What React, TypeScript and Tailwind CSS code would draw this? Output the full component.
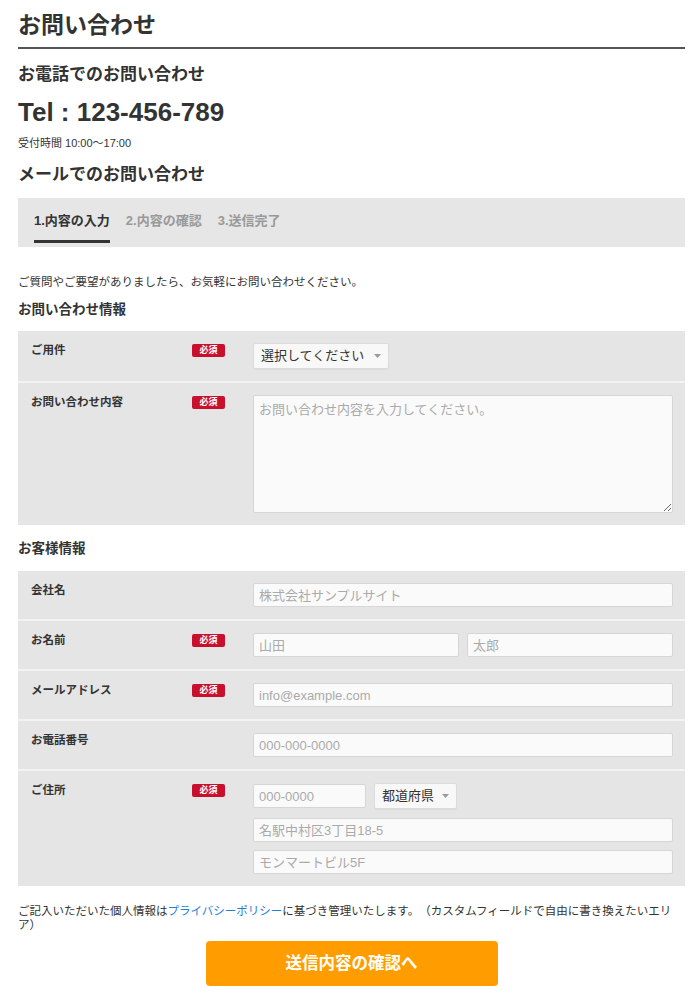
import type { ReactNode } from "react";

const Badge = () => (
  <span className="mt-[1px] flex h-[13px] w-[33px] items-center justify-center rounded-[2px] bg-[#c8102e] text-[9px] font-bold leading-none text-white">
    必須
  </span>
);

const Arrow = () => (
  <svg
    className="pointer-events-none absolute right-[8px] top-1/2 -translate-y-1/2"
    width="7"
    height="4"
    viewBox="0 0 7 4"
  >
    <path d="M0 0h7L3.5 4z" fill="#9a9a9a" />
  </svg>
);

const inputCls =
  "h-[24px] rounded-[2px] border border-[#d6d6d6] bg-[#fafafa] px-[5px] text-[13px] text-[#333] placeholder:text-[#aaa] outline-none";

const Select = ({ label, width }: { label: string; width: string }) => (
  <div className={`relative ${width}`}>
    <select className="h-[26px] w-full appearance-none rounded-[2px] border border-[#dcdcdc] bg-[#f8f8f8] pl-[7px] pr-[22px] text-[13px] text-[#333] shadow-[0_1px_1px_rgba(0,0,0,0.04)] outline-none">
      <option>{label}</option>
    </select>
    <Arrow />
  </div>
);

function Row({
  label,
  required,
  first,
  children,
}: {
  label: string;
  required?: boolean;
  first?: boolean;
  children: ReactNode;
}) {
  return (
    <div
      className={
        first
          ? "flex items-start bg-[#e5e5e5] py-3 pl-[13px] pr-[12px]"
          : "flex items-start border-t-2 border-[#f3f3f3] bg-[#e5e5e5] py-3 pl-[13px] pr-[12px]"
      }
    >
      <div className="w-[161px] shrink-0 text-[11.5px] font-bold leading-[14px] text-[#333]">
        {label}
      </div>
      <div className="flex w-[61px] shrink-0 items-start">{required && <Badge />}</div>
      <div className="min-w-0 flex-1">{children}</div>
    </div>
  );
}

export default function App() {
  return (
    <div
      lang="ja"
      className="min-h-[999px] bg-white pl-[18px] pr-[15px] pt-[10px] font-['Liberation_Sans','Noto_Sans_CJK_JP',sans-serif] text-[#333] [text-spacing-trim:space-all]"
    >
      <h1 className="border-b-2 border-[#555] pb-[7px] text-[23px] font-bold leading-[30px]">
        お問い合わせ
      </h1>

      <h2 className="mt-[14px] text-[17px] font-bold leading-[24px]">
        お電話でのお問い合わせ
      </h2>
      <p className="mt-[10px] text-[26px] font-bold leading-[30px]">
        Tel : 123-456-789
      </p>
      <p className="mt-[8px] text-[11px] leading-[16px]">受付時間 10:00〜17:00</p>

      <h2 className="mt-[12px] text-[17px] font-bold leading-[24px]">
        メールでのお問い合わせ
      </h2>

      {/* steps */}
      <div className="mt-[11px] flex gap-4 bg-[#e6e6e6] pb-[4px] pl-[16px] pt-[13px] text-[13px] font-bold leading-[20px]">
        <span className="border-b-[3px] border-[#333] pb-[9px] text-[#333]">1.内容の入力</span>
        <span className="pb-[12px] text-[#999]">2.内容の確認</span>
        <span className="pb-[12px] text-[#999]">3.送信完了</span>
      </div>

      <p className="mt-[27px] text-[11.5px] leading-[16px]">
        ご質問やご要望がありましたら、お気軽にお問い合わせください。
      </p>

      <h3 className="mt-[10px] text-[13.5px] font-bold leading-[20px]">お問い合わせ情報</h3>
      <div className="mt-[11px]">
        <Row label="ご用件" required first>
          <Select label="選択してください" width="w-[136px]" />
        </Row>
        <Row label="お問い合わせ内容" required>
          <textarea
            className="block h-[118px] w-full rounded-[2px] border border-[#d6d6d6] bg-[#fafafa] px-[5px] py-[4px] text-[13px] text-[#333] outline-none placeholder:text-[#aaa]"
            placeholder="お問い合わせ内容を入力してください。"
          />
        </Row>
      </div>

      <h3 className="mt-[14px] text-[13.5px] font-bold leading-[20px]">お客様情報</h3>
      <div className="mt-[12px]">
        <Row label="会社名" first>
          <input className={`${inputCls} block w-full`} placeholder="株式会社サンプルサイト" />
        </Row>
        <Row label="お名前" required>
          <div className="flex gap-2">
            <input className={`${inputCls} block w-full min-w-0`} placeholder="山田" />
            <input className={`${inputCls} block w-full min-w-0`} placeholder="太郎" />
          </div>
        </Row>
        <Row label="メールアドレス" required>
          <input className={`${inputCls} block w-full`} placeholder="info@example.com" />
        </Row>
        <Row label="お電話番号">
          <input className={`${inputCls} block w-full`} placeholder="000-000-0000" />
        </Row>
        <Row label="ご住所" required>
          <div className="flex items-center gap-2">
            <input className={`${inputCls} block w-[113px]`} placeholder="000-0000" />
            <Select label="都道府県" width="w-[83px]" />
          </div>
          <input className={`${inputCls} mt-[9px] block w-full`} placeholder="名駅中村区3丁目18-5" />
          <input className={`${inputCls} mt-2 block w-full`} placeholder="モンマートビル5F" />
        </Row>
      </div>

      <p className="mt-[18px] text-[11.5px] leading-[14px]">
        ご記入いただいた個人情報は
        <a href="#" className="text-[#1f7fd8]">
          プライバシーポリシー
        </a>
        に基づき管理いたします。（カスタムフィールドで自由に書き換えたいエリ
        <br />
        ア）
      </p>

      <button className="mx-auto mt-[9px] block h-[45px] w-[292px] rounded-[4px] bg-[#ff9d00] text-[16.5px] font-bold text-white">
        送信内容の確認へ
      </button>
    </div>
  );
}
